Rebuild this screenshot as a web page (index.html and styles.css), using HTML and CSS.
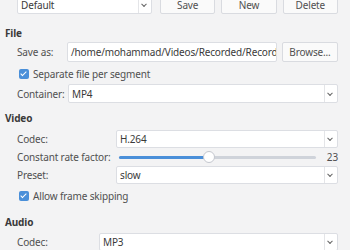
FILE: index.html
```html
<!DOCTYPE html>
<html lang="en">
<head>
    <meta charset="UTF-8">
    <title>Recording settings</title>
    <link rel="stylesheet" href="styles.css">
</head>
<body>

    <div class="profile-row">
        <div class="combo profile-combo"><span>Default</span><span class="arrow"></span></div>
        <button class="btn">Save</button>
        <button class="btn">New</button>
        <button class="btn">Delete</button>
    </div>

    <h2 class="section">File</h2>
    <div class="row">
        <label class="label save-label">Save as:</label>
        <div class="field">/home/mohammad/Videos/Recorded/Record</div>
        <button class="btn">Browse...</button>
    </div>
    <div class="check-row">
        <span class="checkbox"></span>
        <span>Separate file per segment</span>
    </div>
    <div class="row short">
        <label class="label container-label">Container:</label>
        <div class="combo"><span>MP4</span><span class="arrow"></span></div>
    </div>

    <h2 class="section video">Video</h2>
    <div class="row tight">
        <label class="label video-label">Codec:</label>
        <div class="combo"><span>H.264</span><span class="arrow"></span></div>
    </div>
    <div class="row tight">
        <label class="label video-label">Constant rate factor:</label>
        <div class="slider">
            <div class="track"><div class="fill" style="width: 45%"></div></div>
            <span class="handle" style="left: 45%"></span>
        </div>
        <span class="value">23</span>
    </div>
    <div class="row tight">
        <label class="label video-label">Preset:</label>
        <div class="combo"><span>slow</span><span class="arrow"></span></div>
    </div>
    <div class="check-row">
        <span class="checkbox"></span>
        <span>Allow frame skipping</span>
    </div>

    <h2 class="section audio">Audio</h2>
    <div class="row tight">
        <label class="label audio-label">Codec:</label>
        <div class="combo"><span>MP3</span><span class="arrow"></span></div>
    </div>

</body>
</html>
```

FILE: styles.css
```css
body {
    font-family: 'Noto Sans', 'Open Sans', sans-serif;
    font-size: 10px;
    letter-spacing: -0.15px;
    background-color: #f3f3f4;
    color: #505050;
    margin: 0;
    padding: 0 12px 0 17px;
    overflow: hidden;
}

.profile-row {
    display: flex;
    gap: 6px;
    height: 18px;
    margin-top: -4px;
}

.profile-combo {
    width: 135px;
    flex: none !important;
    margin-right: 2px;
}

.btn {
    font-family: inherit;
    font-size: 10px;
    letter-spacing: inherit;
    color: #505050;
    background: #fafafa;
    border: 1px solid #d9dbe0;
    border-radius: 2px;
    width: 56px;
    height: 100%;
    padding: 0;
}

.section {
    font-size: 10px;
    font-weight: bold;
    color: #3a3a3a;
    margin: 0 0 0 -12px;
    height: 14px;
    line-height: 14px;
    padding-top: 12px;
    padding-bottom: 2px;
}

.section.video {
    padding-top: 8px;
    padding-bottom: 5px;
}

.section.audio {
    padding-top: 9px;
    padding-bottom: 4px;
}

.row {
    display: flex;
    align-items: center;
    gap: 5px;
    height: 20px;
}

.row.short {
    height: 19px;
}

.row.tight {
    height: 18px;
}

.label {
    flex: none;
    white-space: nowrap;
}

.save-label {
    width: 45px;
}

.container-label {
    width: 46px;
}

.video-label {
    width: 94px;
}

.audio-label {
    width: 77px;
}

.field,
.combo {
    flex: 1;
    height: 100%;
    box-sizing: border-box;
    background: #fff;
    border: 1px solid #dcdee3;
    border-radius: 2px;
    color: #3a3a3a;
    display: flex;
    align-items: center;
    padding-left: 3px;
    white-space: nowrap;
    overflow: hidden;
    min-width: 0;
}

.combo span:first-child {
    flex: 1;
}

.arrow {
    flex: none;
    width: 12px;
    height: 100%;
    border-left: 1px solid #e4e5e8;
    position: relative;
}

.arrow::after {
    content: "";
    position: absolute;
    left: 3px;
    top: 50%;
    width: 3px;
    height: 3px;
    border-right: 1px solid #666;
    border-bottom: 1px solid #666;
    transform: translateY(-70%) rotate(45deg);
}

.check-row {
    display: flex;
    align-items: center;
    gap: 4px;
    height: 16px;
    margin: 4px 0 2px 2px;
}

.checkbox {
    width: 10px;
    height: 10px;
    border-radius: 2px;
    background: #4a8fd9;
    position: relative;
}

.checkbox::after {
    content: "";
    position: absolute;
    left: 3px;
    top: 1px;
    width: 2px;
    height: 5px;
    border-right: 1.5px solid #fff;
    border-bottom: 1.5px solid #fff;
    transform: rotate(45deg);
}

.slider {
    flex: 1;
    position: relative;
    height: 100%;
    display: flex;
    align-items: center;
    margin-left: 3px;
    margin-right: 5px;
}

.track {
    width: 100%;
    height: 3px;
    background: #cfd3da;
    border-radius: 2px;
}

.fill {
    height: 100%;
    background: #4a8fd9;
    border-radius: 2px;
}

.handle {
    position: absolute;
    top: 50%;
    width: 10px;
    height: 10px;
    margin: -6px 0 0 -5px;
    border-radius: 50%;
    background: #fff;
    border: 1px solid #c4c7ce;
}

.value {
    width: 12px;
    text-align: right;
}
```
